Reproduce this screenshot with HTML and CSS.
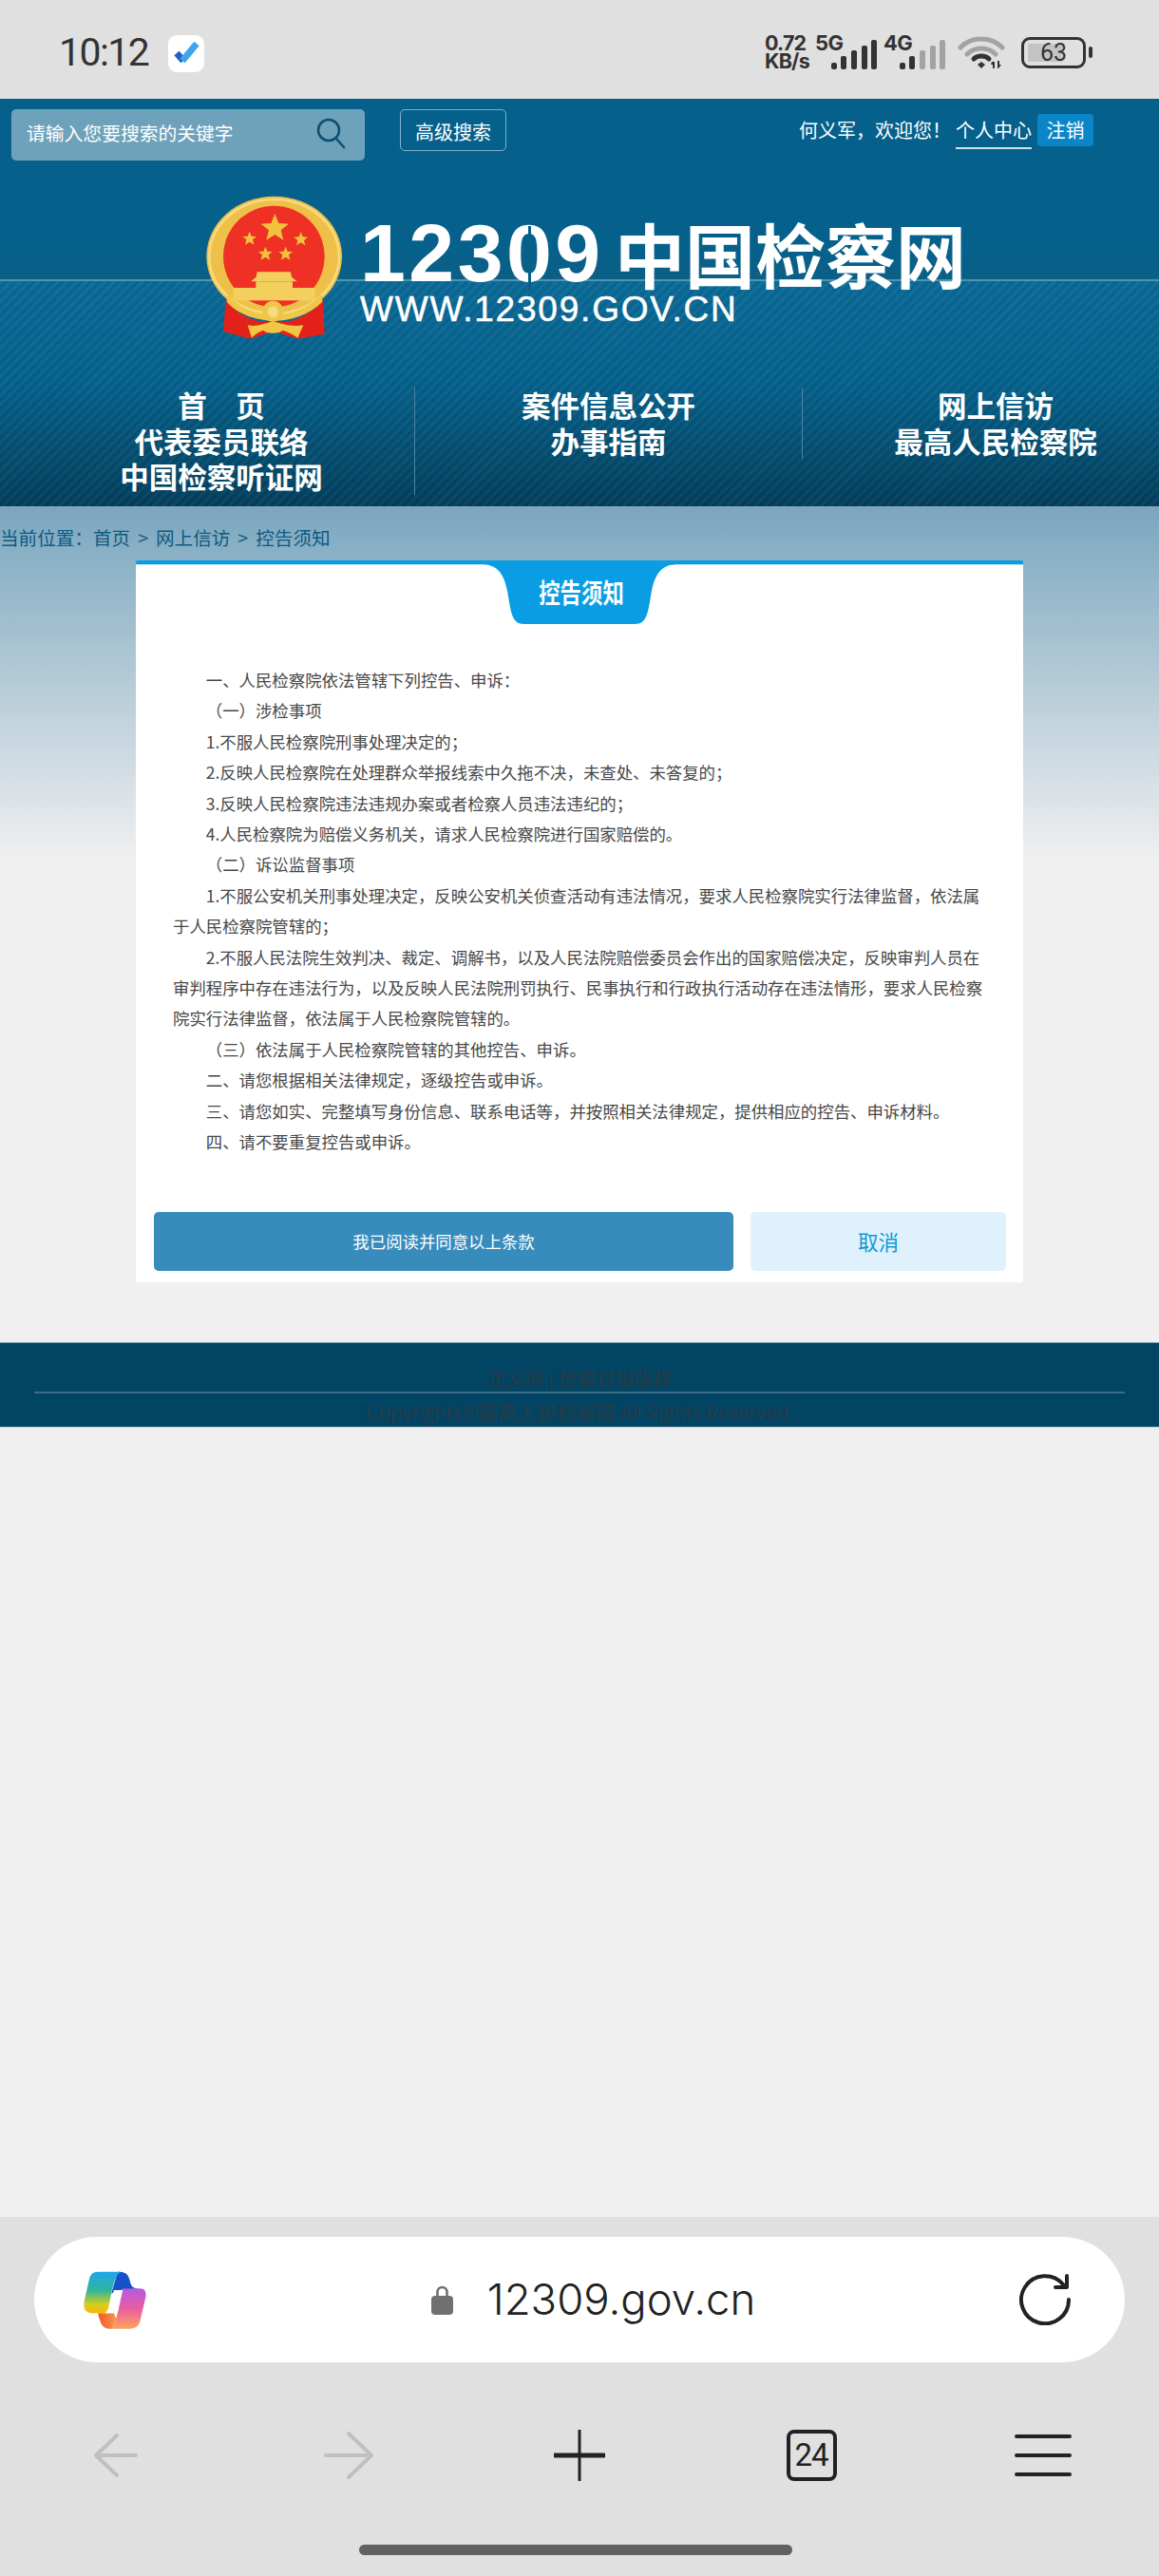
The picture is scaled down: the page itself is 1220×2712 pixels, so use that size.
FILE: index.html
```html
<!DOCTYPE html>
<html lang="zh-CN">
<head>
<meta charset="utf-8">
<title>控告须知</title>
<link rel="stylesheet" href="styles.css">
</head>
<body>
<div class="statusbar">
  <span class="time">10:12</span>
  <span class="appicon">
    <svg width="28" height="24" viewBox="0 0 28 24"><path d="M4 12l7 8" fill="none" stroke="#1f5fc4" stroke-width="7"/><path d="M10 20L25 2" fill="none" stroke="#3fa4ef" stroke-width="7"/></svg>
  </span>
  <div class="sysicons">
    <div class="speed"><span>0.72</span><span>KB/s</span></div>
    <div class="net">
      <span class="nettype">5G</span>
      <svg class="bars" width="48" height="31" viewBox="0 0 48 31">
        <g fill="#333"><rect x="0" y="24" width="6" height="7" rx="2"/><rect x="10" y="17" width="6" height="14" rx="2"/><rect x="21" y="11" width="6" height="20" rx="2"/><rect x="32" y="6" width="6" height="25" rx="2"/><rect x="42" y="0" width="6" height="31" rx="2"/></g>
      </svg>
    </div>
    <div class="net">
      <span class="nettype">4G</span>
      <svg class="bars" width="48" height="31" viewBox="0 0 48 31">
        <g fill="#333"><rect x="0" y="24" width="6" height="7" rx="2"/><rect x="10" y="17" width="6" height="14" rx="2"/></g>
        <g fill="#a3a3a3"><rect x="21" y="11" width="6" height="20" rx="2"/><rect x="32" y="6" width="6" height="25" rx="2"/><rect x="42" y="0" width="6" height="31" rx="2"/></g>
      </svg>
    </div>
    <svg class="wifi" width="50" height="36" viewBox="0 0 50 36">
      <path d="M3 13C15 1 35 1 47 13" fill="none" stroke="#a3a3a3" stroke-width="5" stroke-linecap="round"/>
      <path d="M10 20C18 12 32 12 40 20" fill="none" stroke="#a3a3a3" stroke-width="5" stroke-linecap="round"/>
      <path d="M17 25C21 21 29 21 33 25" fill="none" stroke="#333" stroke-width="5" stroke-linecap="round"/>
      <path d="M21 31l4-3 4 3-4 4z" fill="#333"/>
      <path d="M36 28h3v7h-2v-4h-2zM42 35v-8h2v4h2l-3 4z" fill="#333"/>
    </svg>
    <div class="battery">63</div>
    <div class="nub"></div>
  </div>
</div>

<header class="header">
  <div class="topbar">
    <div class="search">
      <span>请输入您要搜索的关键字</span>
      <svg width="34" height="34" viewBox="0 0 34 34"><circle cx="15" cy="14" r="11" fill="none" stroke="#0f4f72" stroke-width="2.6"/><path d="M23 23l8 9" stroke="#0f4f72" stroke-width="2.6" stroke-linecap="round"/></svg>
    </div>
    <a class="advsearch">高级搜索</a>
    <div class="user">
      <span class="welcome">何义军，欢迎您！</span>
      <a class="center">个人中心</a>
      <a class="logout">注销</a>
    </div>
  </div>
  <div class="logo">
    <svg class="emblem" width="180" height="180" viewBox="0 0 540 540">
      <ellipse cx="266" cy="225" rx="214" ry="190" fill="#eec04a"/>
      <ellipse cx="266" cy="225" rx="205" ry="180" fill="none" stroke="#f7da7c" stroke-width="8"/>
      <circle cx="265" cy="225" r="160" fill="#ee3124"/>
      <g fill="#f2c23c">
        <path d="M268 90l12 30 32 2-25 20 8 31-27-17-27 17 8-31-25-20 32-2z"/>
        <path d="M188 146l6 15 16 1-12 10 4 16-14-9-14 9 4-16-12-10 16-1z"/>
        <path d="M238 194l6 15 16 1-12 10 4 16-14-9-14 9 4-16-12-10 16-1z"/>
        <path d="M302 194l6 15 16 1-12 10 4 16-14-9-14 9 4-16-12-10 16-1z"/>
        <path d="M350 148l6 15 16 1-12 10 4 16-14-9-14 9 4-16-12-10 16-1z"/>
      </g>
      <g fill="#f3cf5e">
        <path d="M212 274h106l3 16 17 14h-146l17-14z"/>
        <rect x="208" y="304" width="116" height="20"/>
        <rect x="137" y="324" width="258" height="40"/>
      </g>
      <path d="M113 362C140 395 165 412 200 425C240 436 290 436 330 425C365 412 395 392 420 362L425 470L340 485L265 462L190 485L105 462z" fill="#e3211b"/>
      <path d="M118 345C165 395 215 410 265 410C315 410 365 395 415 345L418 368C375 412 315 428 265 428C215 428 155 412 116 368z" fill="#f0c647"/>
      <circle cx="262" cy="398" r="33" fill="#f0c647"/>
      <circle cx="262" cy="400" r="17" fill="#f7dc86"/>
      <path d="M182 442C210 448 235 438 262 430C290 438 320 448 358 442L340 482C325 470 305 462 292 458C285 470 240 470 232 458C220 462 205 470 195 482z" fill="#f0c647"/>
    </svg>
    <div class="logotext">
      <div class="logotitle"><span class="digits">123<span class="zero">0</span>9</span><span class="cn">中国检察网</span></div>
      <div class="logourl">WWW.12309.GOV.CN</div>
    </div>
  </div>
  <nav class="nav">
    <div class="navcol"><a>首　页</a><a>代表委员联络</a><a>中国检察听证网</a></div>
    <div class="navcol short"><a>案件信息公开</a><a>办事指南</a></div>
    <div class="navcol last"><a>网上信访</a><a>最高人民检察院</a></div>
  </nav>
</header>

<main class="main">
  <div class="crumb">当前位置：首页 &gt; 网上信访 &gt; 控告须知</div>
  <section class="card">
    <div class="tab"><h1>控告须知</h1></div>
    <div class="notice">
      <p>一、人民检察院依法管辖下列控告、申诉：</p>
      <p>（一）涉检事项</p>
      <p>1.不服人民检察院刑事处理决定的；</p>
      <p>2.反映人民检察院在处理群众举报线索中久拖不决，未查处、未答复的；</p>
      <p>3.反映人民检察院违法违规办案或者检察人员违法违纪的；</p>
      <p>4.人民检察院为赔偿义务机关，请求人民检察院进行国家赔偿的。</p>
      <p>（二）诉讼监督事项</p>
      <p>1.不服公安机关刑事处理决定，反映公安机关侦查活动有违法情况，要求人民检察院实行法律监督，依法属于人民检察院管辖的；</p>
      <p>2.不服人民法院生效判决、裁定、调解书，以及人民法院赔偿委员会作出的国家赔偿决定，反映审判人员在审判程序中存在违法行为，以及反映人民法院刑罚执行、民事执行和行政执行活动存在违法情形，要求人民检察院实行法律监督，依法属于人民检察院管辖的。</p>
      <p>（三）依法属于人民检察院管辖的其他控告、申诉。</p>
      <p>二、请您根据相关法律规定，逐级控告或申诉。</p>
      <p>三、请您如实、完整填写身份信息、联系电话等，并按照相关法律规定，提供相应的控告、申诉材料。</p>
      <p>四、请不要重复控告或申诉。</p>
    </div>
    <div class="actions">
      <a class="btn agree">我已阅读并同意以上条款</a>
      <a class="btn cancel">取消</a>
    </div>
  </section>
</main>

<footer class="footer">
  <div class="flinks">正义网 | 检察日报版样</div>
  <div class="fcopy">Copyrights©最高人民检察院 All Rights Reserved.</div>
</footer>

<div class="blank"></div>

<div class="browser">
  <div class="address">
    <svg class="copilot" width="67" height="61" viewBox="80 90 200 182">
      <defs>
        <linearGradient id="cpa" x1="0" y1="0" x2="0" y2="1"><stop offset="0" stop-color="#1ea7ee"/><stop offset=".45" stop-color="#2fb59a"/><stop offset=".8" stop-color="#d9cf1a"/><stop offset="1" stop-color="#f0b90f"/></linearGradient>
        <linearGradient id="cpb" x1="0" y1="0" x2="0" y2="1"><stop offset="0" stop-color="#b45ae0"/><stop offset=".5" stop-color="#ea5ca0"/><stop offset="1" stop-color="#fda55a"/></linearGradient>
        <linearGradient id="cpc" x1="0" y1="0" x2="1" y2="0"><stop offset="0" stop-color="#f0562c"/><stop offset="1" stop-color="#f99a4c"/></linearGradient>
      </defs>
      <path d="M190 92C225 92 225 108 232 132C236 145 250 145 262 145L205 148L170 160z" fill="#1552c9"/>
      <path d="M128 222H178L186 240L172 271H162C140 271 136 250 130 232z" fill="url(#cpc)"/>
      <path d="M128 92H200C185 100 180 120 172 150L158 222L105 222C85 218 82 205 85 185L100 118C104 100 112 92 128 92z" fill="url(#cpa)"/>
      <path d="M205 145H262C274 145 281 152 278 172L262 240C258 262 248 271 228 271H168C180 262 186 240 190 218L198 170C200 155 202 150 205 145z" fill="url(#cpb)"/>
      <path d="M178 150H206L190 222H150C165 210 170 185 178 150z" fill="#fff"/>
    </svg>
    <div class="url">
      <svg width="23" height="31" viewBox="0 0 23 31"><path d="M6.5 12V7a5 5 0 0 1 10 0v5" fill="none" stroke="#707070" stroke-width="2.6"/><rect x="0" y="11" width="23" height="20" rx="4" fill="#707070"/></svg>
      <span>12309.gov.cn</span>
    </div>
    <svg width="54" height="54" viewBox="0 0 54 54"><path d="M52 27A25 25 0 1 1 46 11" fill="none" stroke="#222" stroke-width="4" stroke-linecap="round"/><path d="M50 2V14H38" fill="none" stroke="#222" stroke-width="4" stroke-linecap="round" stroke-linejoin="round"/></svg>
  </div>
  <div class="toolbar">
    <svg width="46" height="46" viewBox="0 0 46 46"><path d="M24 2L2 23l22 21M2 23h42" fill="none" stroke="#c0c0c0" stroke-width="4" stroke-linecap="round" stroke-linejoin="round"/></svg>
    <svg width="54" height="50" viewBox="0 0 54 50"><path d="M28 2l24 23-24 23M52 25H4" fill="none" stroke="#c0c0c0" stroke-width="4" stroke-linecap="round" stroke-linejoin="round"/></svg>
    <svg width="54" height="54" viewBox="0 0 54 54"><path d="M27 1v52" fill="none" stroke="#222" stroke-width="3" stroke-linecap="round"/><path d="M1 27h52" fill="none" stroke="#222" stroke-width="5" stroke-linecap="round"/></svg>
    <div class="tabs">24</div>
    <div class="menu"><i></i><i></i><i></i></div>
  </div>
  <div class="homebar"></div>
</div>
</body>
</html>
```
FILE: styles.css
```css
* { box-sizing: border-box; }
html, body { margin: 0; padding: 0; }
body {
  width: 1220px;
  height: 2712px;
  overflow: hidden;
  display: flex;
  flex-direction: column;
  background: #f0f0f0;
  font-family: "Noto Sans CJK SC", "Noto Sans", sans-serif;
}
a { color: inherit; text-decoration: none; }
p, h1 { margin: 0; }

/* status bar */
.statusbar {
  height: 104px;
  flex: none;
  background: #e0e0e0;
  display: flex;
  align-items: center;
  padding-left: 62px;
  color: #333;
}
.time {
  font: 400 41px/1 Roboto, sans-serif;
  letter-spacing: -1.6px;
  width: 115px;
  padding-top: 6px;
}
.appicon {
  width: 38px;
  height: 39px;
  margin-top: 8px;
  border-radius: 9px;
  background: #fff;
  display: flex;
  align-items: center;
  justify-content: center;
}
.sysicons {
  margin-left: 590px;
  display: flex;
  align-items: center;
  height: 40px;
  margin-top: 6px;
}
.speed {
  width: 53px;
  display: flex;
  flex-direction: column;
  font: 700 21.5px/19px Inter, Roboto, sans-serif;
  letter-spacing: -.8px;
}
.net {
  width: 65px;
  height: 36px;
  margin-right: 7px;
  position: relative;
  display: flex;
  justify-content: flex-end;
  align-items: flex-end;
}
.nettype {
  position: absolute;
  left: 0;
  top: -3px;
  font: 700 22px/22px Inter, Roboto, sans-serif;
  letter-spacing: -.6px;
}
.wifi { margin-left: 6px; }
.battery {
  width: 68px;
  height: 33px;
  margin-left: 17px;
  border: 3px solid #333;
  border-radius: 9px;
  font: 400 25px/27px Roboto, sans-serif;
  text-align: center;
  background: linear-gradient(#c4c4c4, #c4c4c4) 4px 4px / 36px 19px no-repeat;
}
.nub { width: 4px; height: 12px; margin-left: 3px; background: #333; border-radius: 2px; }

/* header */
.header {
  height: 432px;
  flex: none;
  color: #fff;
  border-bottom: 3px solid #80a6bc;
  background:
    linear-gradient(#4f93b5, #4f93b5) 0 190px / 100% 2px no-repeat,
    repeating-linear-gradient(135deg, rgba(255,255,255,.035) 0 3px, rgba(0,0,0,.03) 3px 7px) 0 192px / 100% 240px no-repeat,
    linear-gradient(#05618c 0, #05618c 150px, #0c5f85 190px, #0a6a97 192px, #05618c 300px, #033f5c 100%);
}
.topbar {
  height: 91px;
  display: flex;
  align-items: flex-start;
  padding: 11px 0 0 12px;
}
.search {
  width: 372px;
  height: 54px;
  border-radius: 5px;
  background: #6ea2bb;
  display: flex;
  align-items: center;
  justify-content: space-between;
  padding: 0 19px 4px 16px;
  font-size: 19.8px;
  line-height: 1;
}
.advsearch {
  margin-left: 37px;
  width: 112px;
  height: 44px;
  border: 1px solid #7fb0c8;
  border-radius: 5px;
  font-size: 20px;
  line-height: 46px;
  text-align: center;
}
.user {
  margin-left: 308px;
  margin-top: 5px;
  display: flex;
  align-items: flex-start;
  font-size: 20px;
  line-height: 34px;
}
.welcome { width: 165px; }
.center { border-bottom: 2px solid #cfe2ec; height: 37px; }
.logout {
  margin-left: 6px;
  width: 59px;
  height: 34px;
  border-radius: 4px;
  background: #0a86c8;
  text-align: center;
}
.logo { display: flex; height: 180px; padding-left: 200px; }
.emblem { flex: none; }
.logotext { padding-top: 31px; margin-left: -1px; }
.logotitle { display: flex; align-items: center; height: 80px; line-height: 80px; }
.digits {
  font: 700 86px/80px "Liberation Sans", sans-serif;
  letter-spacing: 3.5px;
  width: 268px;
}
.zero { position: relative; }
.zero::after {
  content: "";
  position: absolute;
  left: 23px;
  top: 20px;
  width: 3px;
  height: 68px;
  background: #05618c;
}
.cn {
  font-weight: 700;
  font-size: 74px;
  line-height: 80px;
}
.logourl {
  font: 400 37px/40px "Liberation Sans", sans-serif;
  letter-spacing: 1.8px;
  -webkit-text-stroke: .5px #fff;
}
.nav {
  margin-top: 33px;
  padding-left: 30px;
  display: grid;
  grid-template-columns: 407px 408px 406px;
  align-items: start;
}
.navcol {
  display: flex;
  flex-direction: column;
  align-items: center;
  font-size: 30.5px;
  font-weight: 700;
  line-height: 37.5px;
  border-right: 1px solid #4a84a2;
  height: 113px;
}
.navcol.short { height: 75px; }
.navcol.last { border-right: 0; }

/* main */
.main {
  height: 877px;
  flex: none;
  background: linear-gradient(#7ba7bf 0, #f0f0f0 370px);
}
.crumb {
  height: 54px;
  padding-top: 6px;
  font-size: 19.6px;
  line-height: 48px;
  word-spacing: 3.6px;
  color: #0f5a84;
}
.card {
  width: 934px;
  height: 760px;
  margin-left: 143px;
  background: #fff;
  border-top: 4px solid #0a9de3;
  border-radius: 2px 2px 0 0;
  box-shadow: inset 0 1px 0 #c4e8f8;
}
.tab {
  width: 208px;
  height: 64px;
  margin: 0 auto;
  padding: 0 0 7px 4px;
  background: #0a9de3;
  clip-path: path("M0 0H208C192 0 184 8 180 28C176 50 176 63 162 63H46C32 63 32 50 28 28C24 8 16 0 0 0Z");
  display: flex;
  align-items: center;
  justify-content: center;
}
.tab h1 {
  font-size: 28px;
  font-weight: 700;
  line-height: 1;
  color: #fff;
  transform: scaleX(.8);
  white-space: nowrap;
}
.notice {
  margin: 42px 0 0 39px;
  width: 858px;
  font-size: 17.4px;
  line-height: 32.4px;
  color: #484848;
}
.notice p { text-indent: 2em; }
.actions {
  margin: 57px 0 0 19px;
  display: flex;
  gap: 18px;
}
.btn {
  height: 62px;
  border-radius: 5px;
  display: flex;
  align-items: center;
  justify-content: center;
}
.agree { width: 610px; background: #388cbc; color: #fff; font-size: 17.4px; }
.cancel { width: 269px; background: #dff1fc; color: #1199d6; font-size: 21.5px; }

/* footer */
.footer {
  height: 90px;
  flex: none;
  background: #014464;
  border-top: 1px solid #7fa7bd;
  border-bottom: 1px solid #a9cfe2;
  text-align: center;
  color: #2a3b45;
}
.flinks {
  margin: 0 36px;
  height: 53px;
  padding-top: 25px;
  border-bottom: 2px solid #3d6d88;
  font-size: 20px;
  line-height: 26px;
}
.fcopy {
  font: 400 21px/40px "Open Sans", "Noto Sans CJK SC", sans-serif;
  letter-spacing: -.4px;
}

.blank { flex: 1; }

/* browser chrome */
.browser {
  height: 378px;
  flex: none;
  background: #e0e0e0;
  padding-top: 21px;
}
.address {
  height: 132px;
  margin: 0 36px;
  border-radius: 66px;
  background: #fff;
  display: flex;
  align-items: center;
  justify-content: space-between;
  padding: 0 57px 0 51px;
}
.url {
  margin-left: 22px;
  display: flex;
  align-items: center;
  gap: 36px;
  font: 300 45.5px/1 Inter, sans-serif;
  color: #222;
}
.toolbar {
  height: 56px;
  margin-top: 70px;
  display: grid;
  grid-template-columns: repeat(5, 1fr);
  justify-items: center;
  align-items: center;
}
.tabs {
  width: 53px;
  height: 54px;
  border: 4px solid #222;
  border-radius: 8px;
  font: 400 33px/46px Roboto, sans-serif;
  letter-spacing: -1px;
  text-align: center;
  color: #222;
}
.menu {
  width: 60px;
  height: 44px;
  display: flex;
  flex-direction: column;
  justify-content: space-between;
}
.menu i { display: block; height: 4px; border-radius: 2px; background: #222; }
.homebar {
  width: 456px;
  height: 11px;
  margin: 66px 0 0 378px;
  border-radius: 6px;
  background: #616161;
}
```
